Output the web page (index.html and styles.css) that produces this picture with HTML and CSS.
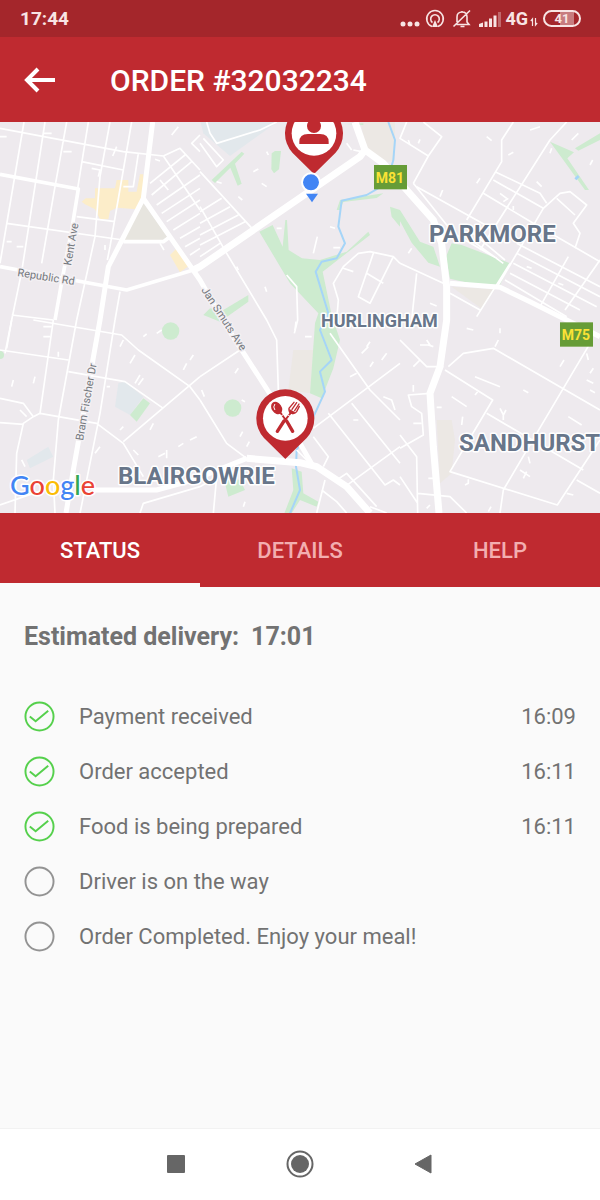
FILE: index.html
```html
<!DOCTYPE html>
<html lang="en">
<head>
<meta charset="utf-8">
<meta name="viewport" content="width=device-width, initial-scale=1">
<title>Order #32032234</title>
<link rel="stylesheet" href="styles.css">
</head>
<body>
<div class="screen">
  <div class="statusbar">
    <span class="clock">17:44</span>
    <div class="indicators">
      <svg width="104" height="22" viewBox="0 0 104 22" fill="none" stroke="#f8e4e4" stroke-width="2" aria-hidden="true">
        <g fill="#f8e4e4" stroke="none"><circle cx="4" cy="16" r="2.500"/><circle cx="11" cy="16" r="2.500"/><circle cx="18" cy="16" r="2.500"/></g>
        <path d="M33 18.600a8.300 8.300 0 1 1 6 0M33.500 14.500a4.300 4.300 0 1 1 5 0" stroke-width="1.600"/>
        <path d="M36 12l3 7h-6z" fill="#f8e4e4" stroke="none"/>
        <path d="M58 14V9c0-3 2-5 5-5s5 2 5 5v5l2 2.500H57.500M63 3v1M61.500 18.500h4M54.500 18.500L71 2.500" stroke-width="1.600"/>
        <g fill="#f8e4e4" stroke="none"><path d="M80 16l4-1.500V19h-4zM85.500 13.500h3V19h-3zM90 10.500h3V19h-3zM94.500 7.500h3V19h-3z"/><path opacity=".35" d="M99 4h3v15h-3z"/></g>
      </svg>
      <span class="network">4G</span>
      <svg width="8" height="10" viewBox="0 0 8 10" fill="none" stroke="#f8e4e4" stroke-width="1.200" aria-hidden="true"><path d="M2.500 9V2L.8 4M5.500 1v7l1.700-2"/></svg>
      <span class="battery">41</span>
    </div>
  </div>
  <header class="appbar">
    <button class="back" type="button" aria-label="Back">
      <svg width="32" height="26" viewBox="0 0 32 26" fill="none" stroke="#fff" stroke-width="4" aria-hidden="true"><path d="M31 13H4M14 2L3 13l11 11"/></svg>
    </button>
    <h1 class="title">ORDER #32032234</h1>
  </header>

  <svg class="map" viewBox="0 0 600 391" preserveAspectRatio="xMidYMid slice" role="img" aria-label="Delivery map">
    <rect width="600" height="391" fill="#eeeaee"/>
    <g transform="translate(0 -2) scale(.33333)">
      <g fill="#e2e8ec">
        <path d="M600 0H840L690 108 610 40z"/>
        <path d="M355 790l20-5 55 45-40 55-45-25z"/>
        <path d="M80 1020l65-40 15 30-70 35z"/>
      </g>
      <g fill="#ece8e4">
        <path d="M430 250L370 360h140z" fill="#e7e5df"/>
        <path d="M1080 0h105v120l-35 10-50-40z"/>
        <path d="M1310 900h45l10 60-10 100-35 30z"/>
        <path d="M1355 500l130 8-40 58z"/>
        <path d="M880 690h60l-10 130-65-10z"/>
      </g>
      <g fill="#fcedc9">
        <path d="M245 245l12-10h28v-30h60l5-25h35v35h25l10-52h10v75l-20 30-60-5-20 10-5 25h-25l-15-30-30-15-10-8z"/>
        <path d="M510 405l18-18 42 48-30 22z"/>
      </g>
      <g fill="#cdebcf">
        <path d="M778 335l40-20 30 65 8-80h5l5 90 40 25 54 5 80-25 65-60 5 10-142 110 27 130 25 75-20 85-35 90-35-15 15-210 10-30-85-90z"/>
        <path d="M875 1045l30 10 5 65 45 25-5 15-50-20-25 40h-22l27-70z"/>
        <path d="M635 180l90-85 8 6-28 30 20 60-12 6-22-54-46 46zM815 100l10-7h18l-6 55-15 12-8-12z"/>
        <path d="M610 610l20-20 40 5 75-45v20l-85 60z" transform="translate(0 -25)"/>
        <path d="M1355 370l30 5 145 55-30 65-90-5-60-14-12-66zM1200 270l60 95 40 15 20 60-35-12-50-60-35-65z"/>
        <path d="M1650 65l72 32-20 18 65 95h-12l-65-90zM1725 85l75-45v20l-65 32zM1170 260l30 10v50l-25-30z"/>
        <path d="M1010 270l10-30 130-20-20 14-100 12-10 24z"/>
        <path d="M1040 12l50-2v5zM670 1070l50 10 15 30-50 20z"/>
        <path d="M390 885l40-50 20 15-40 55z"/>
        <circle cx="512" cy="633" r="26"/><circle cx="698" cy="864" r="26"/><circle cx="0" cy="705" r="12"/>
      </g>
      <g class="river">
        <path d="M1165 6l20 54-5 60-20 70-60 35-75 17-10 78 20 50-25 45-45 10-18 30 38 125-25 50 35 90-35 35 15 60-30 65-55 110-2 50 12 70-30 70"/>
        <path d="M1728 170l6 6" stroke-width="14"/>
      </g>
      <g class="road">
        <path d="M72 6L45 165 0 430M135 6L65 455 35 600 15 700M200 6l-35 194-40 230M265 6l-32 199M330 6l-30 164-15 180-55 250M395 6l-25 144-40 230-8 40M415 100l-15 100h-30M0 25l370 70 120 13M245 125l125 25M230 290l115 15M20 310l350 50M360 515l-15 85M35 585l125 15"/>
        <path d="M490 108l50-23 60 65M490 108l110 162M450 190l105-85M455 225l120-100M470 255l130-90M485 280l115-75M500 305l100-65M520 330l80-50M540 355l60-35M555 380l45-25M570 405l30-20M480 180l25 30M600 45l-25 25 25 25"/>
        <path d="M620 6l10 34 20 30 130-40 50-24M600 70l50 70 20-20-60-65M600 155l165 180M600 260l80 140 120 200 30 60 5 150M600 275l65-40M600 310l90-50M600 345l115-60M600 375l135-70M600 410l60-40M860 465l30 35 3 100-10 40"/>
        <path d="M1010 600l5-60-15-50 30-50 45-40 35-5 70 15 20 20M1120 400l-45 130 35 20 70-140M1030 445l30 10M1100 460l50 30"/>
        <path d="M1220 6l-20 49 85 53 40-58-55-44M1285 108l-45 82M1240 190l120 150 130 75M1250 200l170 95 90 50M1540 6l-35 54v65L1400 300M1700 6l-50 54-210 330M1485 155l135 65 20 30M1480 180l150 85M1450 220l150 90 200 115M1395 320l120 100M1400 350l110 80"/>
        <path d="M1630 265l50-45 30-5 50 40-40 55 20 30-15 45M1670 235l55 50M1530 430L1430 590M1630 265L1495 495M1705 410l-85 150M1550 370l250 130M1550 400l250 130M1540 430l250 130M1530 460l210 110M1515 480l185 110M1800 420l-105 150M1200 430l130 60M1250 460l-15 140M1350 520l90 50"/>
        <path d="M0 690l205 30M35 600l-15 85M160 600l-40 280-20 10M230 600l-55 300-15 180 5 100M345 600l-45 280-60 300M100 600l265 45 50 45 155 110 30 40M205 755l170 30 115 80M370 965l230-195M0 835l70 15 30 40-30 20-20 90-5 179M0 908l70 5M120 880l170 30 80 60 60 100M0 1155l130-45M420 1179l10-29 170-50"/>
        <path d="M600 770l120-80M600 840l80 130 60 45M600 1100l50-30-10 110M940 925l260-195M990 640l120 170 90 90M985 880l170 215 25-15 20 15M1055 850l145 180M940 950l45 60-15 30M890 990l50 50M1035 1100l165-120M975 1080l-25 99M965 1110l45 35 30 34M1110 1160l50 19M1010 1080l30-20 90 100"/>
        <path d="M1345 740l45-40 90-15 320 185M1335 750l143 90-128 215 322 100 128-195M1460 880l290 170M1770 670l-160 270-100 170-10 69M1200 660l80 80h50M1290 820l-65 5 10 35 30 20 5 65-70 40M1200 945l50 65 3 169M1200 1070l53 80M1253 1120l97 10 50 49M1730 1080l70 40"/>
      </g>
      <g class="lane">
        <path d="M515 45l20-25M190 95h25M350 80l-12 28M275 145l25 5-5 20M0 50h20M465 118l15 5M480 370l12 20M315 375v15M130 40h25M130 620h25M130 650h20M40 780l-5 20M100 790l5-20M175 710v-15M360 680l10-20M390 730l15-25M405 790l15-25M415 795l15-20M60 870l20 20M65 1020l10 20M285 1000l15-20M360 930l10-10M450 930l10-20M400 990l15 15M475 1010l20-10M535 980l15-10M570 960l20-10M500 990v25M470 640l15-10M550 750l10-20M570 720l10-15M430 650l10-8M320 800h10M20 365h15M50 380h20"/>
        <path d="M760 155l15-8M785 190l15 10M715 230l12 10M800 95l5 10M650 185l15 5M830 325h15M940 400l12-50M990 320l15 5M1000 383h20M1040 70l15 20M1060 90l25 5M795 500l5 15M710 440l5 10M605 810l8 20M705 760l10-15M725 840l10 5M740 980l8-15M720 950l8-15M730 1160l5-15M755 1080l10 10M915 650h20M885 630l3-25M1110 740l10-15M1050 770l20-10M1145 720l15-20M1085 700l20-20M1150 830l25 10 10 30M1060 900h15M1020 610h20M1100 680l10-15"/>
        <path d="M1460 50l15 12M1230 75l-5-15M1255 70l5-12M1590 30l30-10M1525 105l15-8M1500 220l20 15M1510 245l15-10M1430 190l10-15M1320 230l8-20M1610 185l15 15M1650 100l5-15M1770 135l8-15M1715 60l20-20M1580 440l15 5M1675 490l15 5M1225 400l10-15M1290 550l20 8M1540 270v-12M1300 680l-15-5M1240 740l20-20M1260 675h30l-10-15M1400 625l20 5M1500 640v-15M1485 680l10-20M1425 770l75 30M1355 830l45 30M1425 825l8-10M1570 810l15 8M1680 740l12-20M1765 720l-5-20M1770 760l10-15M1760 780l20 10M1770 810l15 8M1705 890l40 25M1500 865l10 20 8-15M1510 885v15M1385 915l3-25M1310 862h15M1240 815v-20M1240 910h25M1285 1075h25M1585 1010l5 20M1560 1050l30 20M1570 1075l10-20M1395 1095l10-5v-12M1700 1120l20 5M1280 1165l10-10M1465 1175l8-15"/>
      </g>
      <g class="avenue">
        <path d="M0 163l235 44-20 123-27 140-23 130M0 440l380 70 200-60M370 365h120l20-15"/>
      </g>
      <g class="highway">
        <path d="M458 6l-28 229-105 205-25 160-80 450-22 129M430 235l170 245 80 140 180 280 80 140M280 1110h190l110-30 160-65M1350 490l150 12 90 43 210 105"/>
        <path class="wide" d="M580 450l20-10 480-330 15-20M1065 6l30 84 55 40 70 80 80 90 25 70 15 130v100l-20 140-30 80 10 160 17 199M740 1015l160 13 50 12 90 60 70 79"/>
      </g>
      <rect x="1122" y="135" width="99" height="73" fill="#669c37"/>
      <rect x="1680" y="607" width="99" height="73" fill="#669c37"/>
    </g>
    <g class="street">
      <text transform="translate(71 144) rotate(-80)">Kent Ave</text>
      <text transform="translate(17 154) rotate(9)">Republic Rd</text>
      <text transform="translate(201 168) rotate(57)">Jan Smuts Ave</text>
      <text transform="translate(83 319) rotate(-80)">Bram Fischer Dr</text>
    </g>
    <g class="suburb">
      <text x="429" y="120">PARKMORE</text>
      <text x="459" y="329">SANDHURST</text>
      <text x="118" y="362">BLAIRGOWRIE</text>
      <text class="small" x="321" y="205">HURLINGHAM</text>
    </g>
    <g class="shield"><text x="390" y="61">M81</text><text x="576" y="218">M75</text></g>
    <text class="google" x="10" y="373"><tspan fill="#4285f4">G</tspan><tspan fill="#ea4335">o</tspan><tspan fill="#fbbc05">o</tspan><tspan fill="#4285f4">g</tspan><tspan fill="#34a853">l</tspan><tspan fill="#ea4335">e</tspan></text>
    <g transform="translate(0 -2) scale(.33333)">
      <g transform="translate(942 40)">
        <path d="M-64 59A87 87 0 1 1 64 59L0 122z" fill="#bf2a30"/><circle r="67" fill="#fff"/>
        <path d="M-44 32v-6q0-24 26-24h36q26 0 26 24v6z" fill="#bf2a30"/><circle cy="-22" r="21" fill="#bf2a30"/>
      </g>
      <path d="M918 221h36l-18 26z" fill="#4285f4"/>
      <circle cx="933" cy="187" r="27" fill="#4285f4" stroke="#fff" stroke-width="6"/>
      <g transform="translate(856 895)">
        <path d="M-64 59A87 87 0 1 1 64 59L0 122z" fill="#bf2a30"/><circle r="67" fill="#fff"/>
        <g fill="#bf2a30" stroke="#bf2a30" stroke-linecap="round">
          <ellipse cx="-26" cy="-31" rx="15" ry="20" transform="rotate(-35 -26 -31)" stroke="none"/>
          <path d="M-32-42q-6 8 0 16" fill="none" stroke="#fff" stroke-width="3"/>
          <g fill="none">
            <path d="M-14-16L12 20M16-16L-12 20" stroke-width="6"/>
            <path d="M4 8L22 39M-4 8L-24 39" stroke-width="10"/>
            <path d="M-14-6l12-8M14-6L2-14" stroke="#fff" stroke-width="3"/>
          </g>
          <path d="M26-48L11-30q-2 12 9 15 9 2 14-5l8-16M34-47L20-27M41-43L28-23" fill="none" stroke-width="4"/>
          <path d="M12-28l18 10-8 6-10-5z" stroke="none"/>
        </g>
      </g>
    </g>
  </svg>

  <div class="tabs" role="tablist">
    <button class="tab active" type="button" role="tab" aria-selected="true">STATUS</button>
    <button class="tab" type="button" role="tab" aria-selected="false">DETAILS</button>
    <button class="tab" type="button" role="tab" aria-selected="false">HELP</button>
  </div>

  <main class="content">
    <h2 class="estimate"><span>Estimated delivery:</span><time>17:01</time></h2>
    <ul class="steps">
      <li class="step"><svg class="mark done" viewBox="0 0 32 32" aria-hidden="true"><circle cx="16" cy="16" r="14.500"/><path d="M6 16l6 5 13-11"/></svg><span class="label">Payment received</span><time>16:09</time></li>
      <li class="step"><svg class="mark done" viewBox="0 0 32 32" aria-hidden="true"><circle cx="16" cy="16" r="14.500"/><path d="M6 16l6 5 13-11"/></svg><span class="label">Order accepted</span><time>16:11</time></li>
      <li class="step"><svg class="mark done" viewBox="0 0 32 32" aria-hidden="true"><circle cx="16" cy="16" r="14.500"/><path d="M6 16l6 5 13-11"/></svg><span class="label">Food is being prepared</span><time>16:11</time></li>
      <li class="step"><svg class="mark" viewBox="0 0 32 32" aria-hidden="true"><circle cx="16" cy="16" r="14.500"/></svg><span class="label">Driver is on the way</span></li>
      <li class="step"><svg class="mark" viewBox="0 0 32 32" aria-hidden="true"><circle cx="16" cy="16" r="14.500"/></svg><span class="label">Order Completed. Enjoy your meal!</span></li>
    </ul>
  </main>

  <nav class="navbar" aria-label="System">
    <button type="button" aria-label="Recent apps"><svg width="28" height="28" viewBox="0 0 28 28"><rect x="5" y="5" width="18" height="18" rx="1" fill="#666"/></svg></button>
    <button type="button" aria-label="Home"><svg width="28" height="28" viewBox="0 0 28 28"><circle cx="14" cy="14" r="12.500" fill="none" stroke="#666" stroke-width="2"/><circle cx="14" cy="14" r="9" fill="#666"/></svg></button>
    <button type="button" aria-label="Back"><svg width="28" height="28" viewBox="0 0 28 28"><path d="M5 14L21 5v18z" fill="#666" stroke="#666" stroke-linejoin="round"/></svg></button>
  </nav>
</div>
</body>
</html>
```

FILE: styles.css
```css
* {
  box-sizing: border-box;
}

body {
  margin: 0;
  background: #fafafa;
  color: #727272;
  font-family: Roboto, "Noto Sans", sans-serif;
}

button {
  padding: 0;
  border: 0;
  background: none;
  color: inherit;
  font: inherit;
}

svg {
  display: block;
}

.screen {
  display: flex;
  flex-direction: column;
  min-height: 100vh;
}

.statusbar {
  display: flex;
  align-items: center;
  justify-content: space-between;
  padding: 0 19px 0 20px;
  height: 37px;
  background: #a4262b;
  color: #f8e4e4;
}

.clock {
  font-size: 19px;
  font-weight: 700;
}

.indicators {
  display: flex;
  align-items: center;
  gap: 2px;
}

.indicators > svg:nth-of-type(2) {
  margin-top: 6px;
}

.network {
  font-size: 18px;
  font-weight: 700;
}

.battery {
  margin-left: 3px;
  width: 38px;
  border: 2px solid #f8e4e4;
  border-radius: 9px;
  background: linear-gradient(90deg, transparent 45%, #c87c7f 45%, #c87c7f 85%, transparent 85%);
  font-size: 13px;
  font-weight: 700;
  line-height: 13px;
  text-align: center;
}

.appbar {
  display: flex;
  align-items: center;
  gap: 54px;
  padding: 0 24px;
  height: 85px;
  background: #bf2a30;
  color: #fff;
}

.title {
  margin: 0;
  padding-top: 2px;
  font-size: 30px;
  font-weight: 500;
}

.map {
  width: 100%;
  aspect-ratio: 600 / 391;
}

.road,
.lane,
.avenue,
.highway,
.river {
  fill: none;
  stroke: #fff;
  stroke-linejoin: round;
}

.road,
.lane {
  stroke-width: 5px;
}

.avenue {
  stroke-width: 11px;
}

.highway {
  stroke-width: 15px;
}

.wide {
  stroke-width: 21px;
}

.river {
  stroke: #a5d5f8;
  stroke-width: 6px;
}

.street,
.suburb,
.google {
  paint-order: stroke;
  stroke: #fff;
  stroke-width: 3px;
  stroke-linejoin: round;
}

.street {
  fill: #75797e;
  stroke: #f3f0f3;
  font-size: 11px;
}

.suburb {
  fill: #68768a;
  font-size: 24px;
  font-weight: 700;
}

.suburb .small {
  font-size: 18px;
}

.shield {
  fill: #fbe235;
  font-size: 14px;
  font-weight: 700;
  text-anchor: middle;
}

.google {
  font-family: Lato, sans-serif;
  font-size: 27px;
  font-weight: 500;
}

.tabs {
  display: grid;
  grid-template-columns: repeat(3, 1fr);
  height: 74px;
  background: #bf2a30;
}

.tab {
  padding-top: 5px;
  border-bottom: 4px solid transparent;
  color: #f3aeb0;
  font-size: 22px;
  font-weight: 500;
}

.tab.active {
  border-bottom-color: #fafafa;
  color: #fff;
}

.content {
  flex: 1;
  padding: 34px 24px;
}

.estimate {
  display: flex;
  gap: 12px;
  margin: 0 0 36px;
  font-size: 25px;
  font-weight: 700;
  line-height: 32px;
}

.steps {
  margin: 0;
  padding: 0;
  list-style: none;
}

.step {
  display: flex;
  align-items: center;
  gap: 24px;
  height: 55px;
  font-size: 22px;
}

.label {
  flex: 1;
}

.mark {
  width: 31px;
  height: 31px;
  fill: none;
  stroke: #939393;
  stroke-width: 2px;
}

.done {
  stroke: #55d04c;
}

.navbar {
  display: flex;
  align-items: center;
  justify-content: center;
  gap: 96px;
  padding-bottom: 2px;
  height: 72px;
  border-top: 1px solid #f2f2f2;
  background: #fff;
}
```
